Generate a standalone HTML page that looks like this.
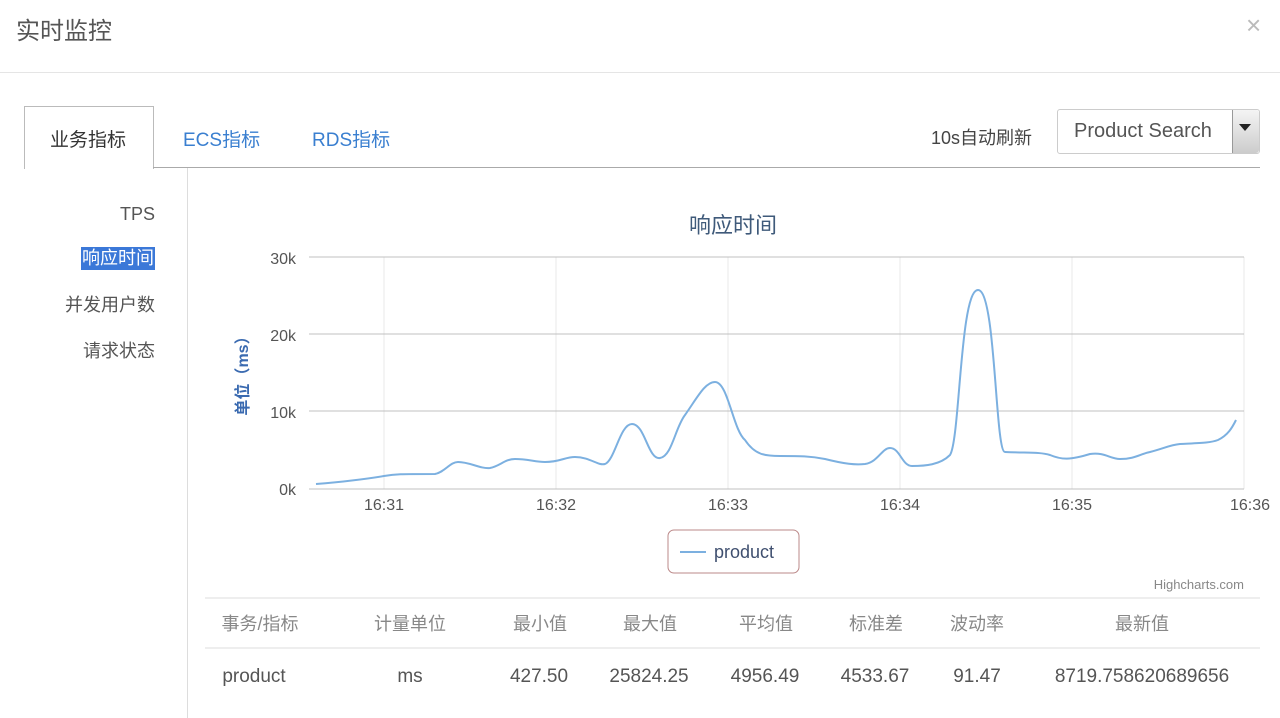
<!DOCTYPE html>
<html><head><meta charset="utf-8"><style>
*{margin:0;padding:0;box-sizing:border-box}
body{width:1280px;height:718px;background:#fff;font-family:"Liberation Sans","Noto Sans CJK SC",sans-serif;color:#555;position:relative;overflow:hidden}
.a{position:absolute;white-space:nowrap}
.r{position:absolute;right:1125px;white-space:nowrap;font-size:18px;color:#555}
</style></head><body>
<div class="a" style="left:16px;top:11px;font-size:24px;color:#555">实时监控</div>
<div class="a" style="left:1246px;top:10px;font-size:26px;color:#bbb">×</div>
<div class="a" style="left:0;top:72px;width:1280px;height:1px;background:#e5e5e5"></div>

<div class="a" style="left:24px;top:106px;width:130px;height:63px;border:1px solid #bbb;border-bottom:none;background:#fff"></div>
<div class="a" style="left:153px;top:167px;width:1107px;height:1px;background:#aaa"></div>
<div class="a" style="left:50px;top:125px;font-size:19px;color:#333">业务指标</div>
<div class="a" style="left:183px;top:125px;font-size:19px;color:#3a7fd0">ECS指标</div>
<div class="a" style="left:312px;top:125px;font-size:19px;color:#3a7fd0">RDS指标</div>
<div class="a" style="left:931px;top:124px;font-size:18px;color:#444">10s自动刷新</div>
<div class="a" style="left:1057px;top:109px;width:203px;height:45px;border:1px solid #ccc;border-radius:3px"></div>
<div class="a" style="left:1074px;top:120px;font-size:20px;color:#555">Product Search</div>
<div class="a" style="left:1232px;top:110px;width:27px;height:43px;background:linear-gradient(#f4f4f4,#ccc);border-left:1px solid #999;border-radius:0 3px 3px 0"></div>
<div class="a" style="left:1239px;top:124px;width:0;height:0;border-left:6px solid transparent;border-right:6px solid transparent;border-top:7px solid #222"></div>

<div class="a" style="left:187px;top:168px;width:1px;height:550px;background:#ddd"></div>
<div class="r" style="top:204px">TPS</div>
<div class="r" style="top:247px;color:#fff;background:#3b78d8;height:23px;line-height:23px;padding:0 1px">响应时间</div>
<div class="r" style="top:291px">并发用户数</div>
<div class="r" style="top:337px">请求状态</div>

<svg class="a" style="left:0;top:0" width="1280" height="718">
<g font-family="Liberation Sans, Noto Sans CJK SC, sans-serif">
<text x="733" y="233" font-size="22" fill="#3f5a7a" text-anchor="middle">响应时间</text>
<g stroke="#e8e8e8"><line x1="384" y1="257" x2="384" y2="489"/><line x1="556" y1="257" x2="556" y2="489"/><line x1="728" y1="257" x2="728" y2="489"/><line x1="900" y1="257" x2="900" y2="489"/><line x1="1072" y1="257" x2="1072" y2="489"/><line x1="1244" y1="257" x2="1244" y2="489"/></g>
<g stroke="#c0c0c0"><line x1="309" y1="257" x2="1244" y2="257"/><line x1="309" y1="334" x2="1244" y2="334"/><line x1="309" y1="411" x2="1244" y2="411"/><line x1="309" y1="489" x2="1244" y2="489"/></g>
<g font-size="16" fill="#555" text-anchor="end"><text x="296" y="264">30k</text><text x="296" y="341">20k</text><text x="296" y="418">10k</text><text x="296" y="495">0k</text></g>
<g font-size="16" fill="#555" text-anchor="middle"><text x="384" y="510">16:31</text><text x="556" y="510">16:32</text><text x="728" y="510">16:33</text><text x="900" y="510">16:34</text><text x="1072" y="510">16:35</text><text x="1250" y="510">16:36</text></g>
<text transform="translate(248,372) rotate(-90)" font-size="16" fill="#3a6ab0" text-anchor="middle" font-weight="bold">单位（ms）</text>
<path fill="none" stroke="#7cb0e0" stroke-width="2" d="M316,484 C340,482 360,480 384,476 C395,474 400,474 435,474 C445,472 450,462 458,462 C470,462 480,469 490,468 C500,466 505,459 515,459 C528,459 535,462 545,462 C560,462 565,457 575,457 C590,457 598,466 605,464 C615,460 620,424 632,424 C645,424 648,460 660,458 C672,456 675,428 685,415 C697,398 705,382 715,382 C728,382 733,430 745,440 C755,455 765,456 780,456 C800,456 810,456 825,459 C845,464 855,465 865,464 C878,462 882,448 890,448 C900,448 902,466 912,466 C925,466 940,465 950,455 C960,440 960,290 978,290 C996,290 995,452 1005,452 C1030,453 1040,452 1050,455 C1062,460 1070,460 1090,454 C1105,452 1110,459 1120,459 C1135,459 1140,454 1150,452 C1165,448 1170,445 1180,444 C1200,443 1210,443 1218,440 C1228,435 1232,428 1236,420"/>
<rect x="668" y="530" width="131" height="43" rx="6" fill="#fff" stroke="#b88"/>
<line x1="680" y1="552" x2="706" y2="552" stroke="#7cb0e0" stroke-width="2"/>
<text x="714" y="558" font-size="18" fill="#3f4f6f">product</text>
<text x="1244" y="589" font-size="13" fill="#888" text-anchor="end">Highcharts.com</text>
<line x1="205" y1="598" x2="1260" y2="598" stroke="#ddd"/>
<line x1="205" y1="648" x2="1260" y2="648" stroke="#ddd"/>
<g font-size="18" fill="#888" text-anchor="middle"><text x="260" y="630">事务/指标</text><text x="410" y="630">计量单位</text><text x="540" y="630">最小值</text><text x="650" y="630">最大值</text><text x="766" y="630">平均值</text><text x="876" y="630">标准差</text><text x="977" y="630">波动率</text><text x="1142" y="630">最新值</text></g>
<g font-size="19" fill="#555" text-anchor="middle"><text x="254" y="682">product</text><text x="410" y="682">ms</text><text x="539" y="682">427.50</text><text x="649" y="682">25824.25</text><text x="765" y="682">4956.49</text><text x="875" y="682">4533.67</text><text x="977" y="682">91.47</text><text x="1142" y="682">8719.758620689656</text></g>
</g></svg>
</body></html>
